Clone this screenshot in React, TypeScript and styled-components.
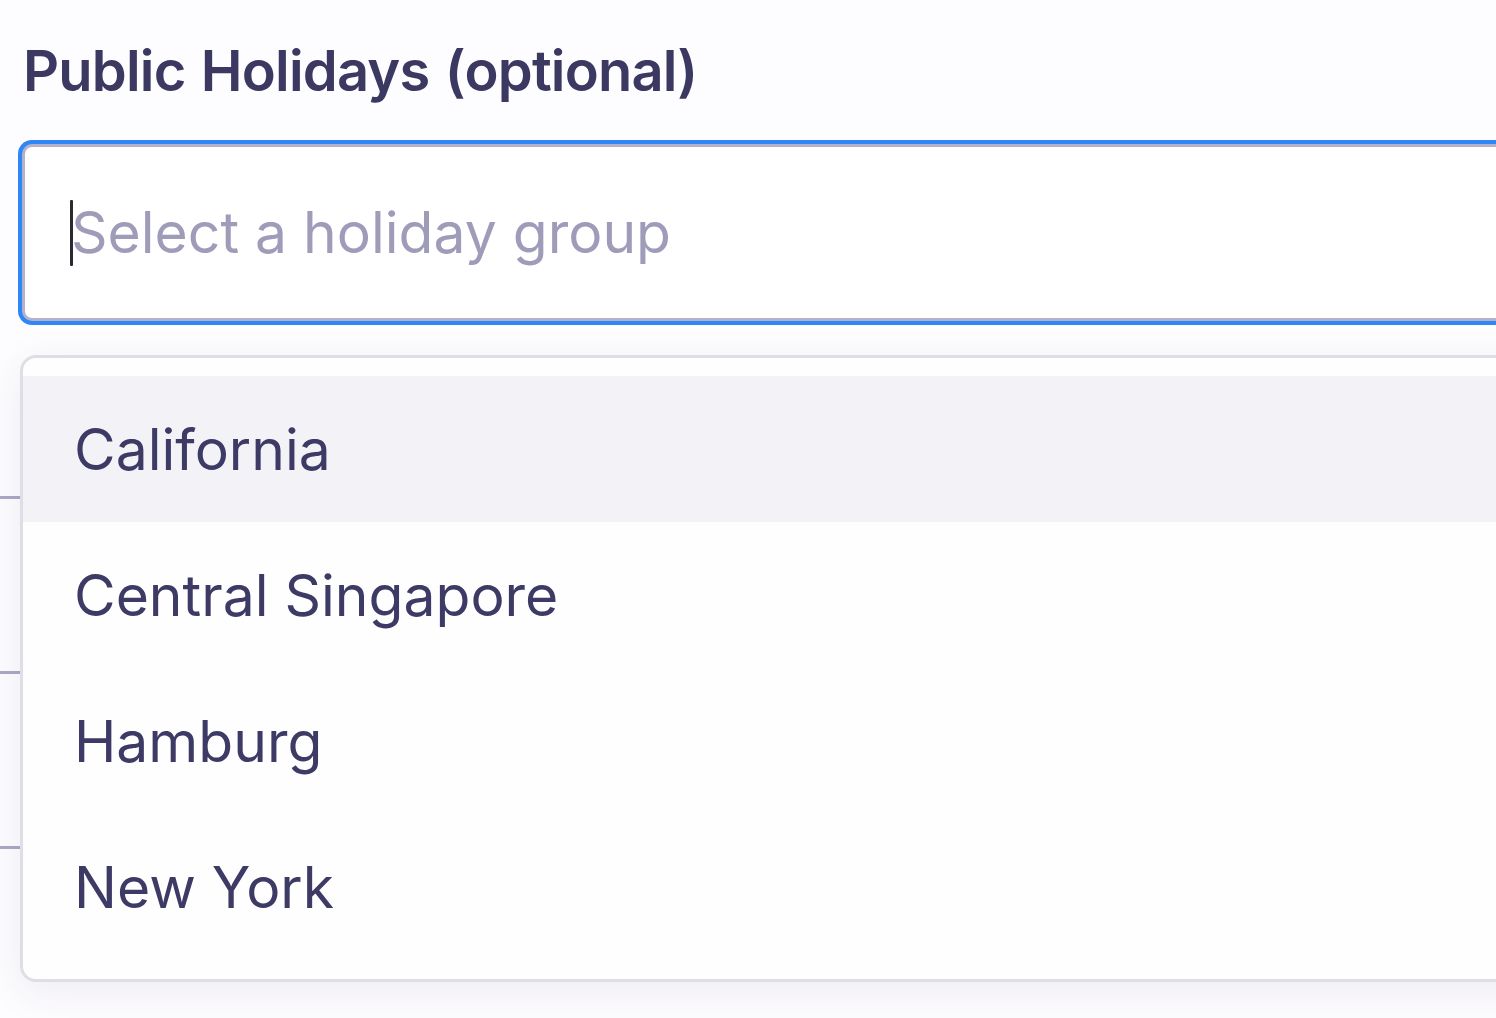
import React from "react";
import styled, { createGlobalStyle } from "styled-components";

const GlobalStyle = createGlobalStyle`
  html, body {
    margin: 0;
    padding: 0;
    background: #fdfcfe;
    overflow: hidden;
  }
  body {
    font-family: Inter, "Noto Sans", "Liberation Sans", sans-serif;
    -webkit-font-smoothing: antialiased;
  }
`;

const holidayGroups = ["California", "Central Singapore", "Hamburg", "New York"];

const Page = styled.div`
  width: 1700px;
  padding: 36px 0 0 0;
`;

const Field = styled.div`
  display: flex;
  flex-direction: column;
  position: relative;
`;

const Label = styled.label`
  margin-left: 23px;
  font-size: 56px;
  line-height: 70px;
  font-weight: 600;
  color: #3b3961;
  letter-spacing: -0.8px;
  word-spacing: 2px;
`;

const Control = styled.div`
  margin: 38px 0 0 22px;
  height: 177px;
  box-sizing: border-box;
  border: 3px solid #b4b1cb;
  border-radius: 10px;
  box-shadow: 0 0 0 4px #2f86f6;
  background: #ffffff;
  display: flex;
  align-items: center;
  padding-left: 45px;
`;

const Caret = styled.span`
  width: 3px;
  height: 66px;
  background: #2a2a33;
  border-radius: 1px;
  margin-right: -2px;
`;

const Placeholder = styled.span`
  font-size: 57px;
  color: #9f9cba;
`;

const Rows = styled.div`
  margin-top: 33px;
  display: flex;
  flex-direction: column;
`;

const Row = styled.div<{ $first?: boolean }>`
  height: ${(p) => (p.$first ? 142 : 172)}px;
  border-bottom: 3px solid #aba8c4;
`;

const Menu = styled.ul`
  position: absolute;
  top: 319px;
  left: 20px;
  width: 1600px;
  margin: 0;
  padding: 18px 0 19px;
  list-style: none;
  background: #fefefe;
  border: 3px solid #dfdee4;
  border-radius: 16px;
  box-shadow: 0 10px 40px rgba(60, 55, 110, 0.08);
`;

const Option = styled.li<{ $active?: boolean }>`
  height: 146px;
  display: flex;
  align-items: center;
  padding-left: 51px;
  font-size: 57px;
  color: #3d3a66;
  background: ${(p) => (p.$active ? "#f3f3f7" : "transparent")};
`;

export default function App() {
  return (
    <>
      <GlobalStyle />
      <Page>
        <Field>
          <Label>Public Holidays (optional)</Label>
          <Control>
            <Caret />
            <Placeholder>Select a holiday group</Placeholder>
          </Control>
          <Rows>
            <Row $first />
            <Row />
            <Row />
            <Row />
          </Rows>
          <Menu>
            {holidayGroups.map((g, i) => (
              <Option key={g} $active={i === 0}>
                {g}
              </Option>
            ))}
          </Menu>
        </Field>
      </Page>
    </>
  );
}
